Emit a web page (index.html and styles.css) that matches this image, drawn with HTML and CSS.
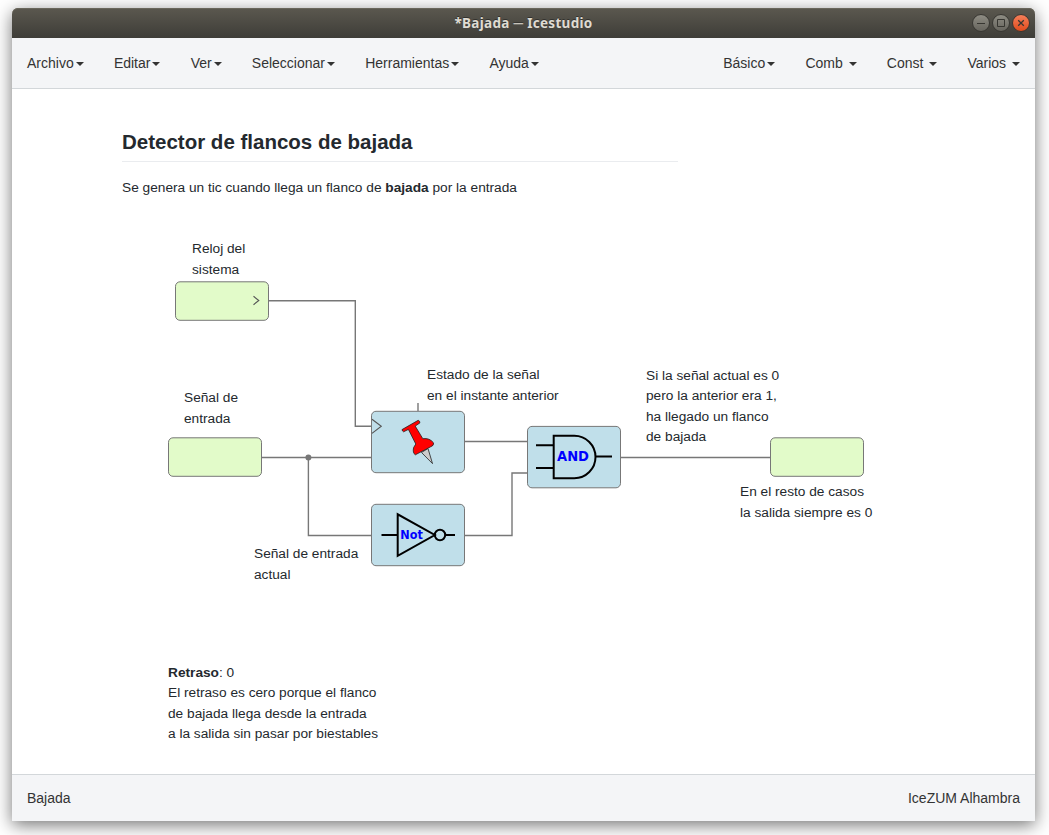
FILE: index.html
```
<!DOCTYPE html>
<html lang="es">
<head>
<meta charset="utf-8">
<title>*Bajada ─ Icestudio</title>
<link rel="stylesheet" href="styles.css">
</head>
<body>
<div class="window">
  <header class="titlebar">
    <h1 class="window-title">*Bajada ─ Icestudio</h1>
    <div class="window-buttons">
      <svg width="60" height="20" viewBox="0 0 60 20">
        <defs>
          <linearGradient id="gray" x2="0" y2="1"><stop offset="0" stop-color="#8f8d84"/><stop offset="1" stop-color="#65635c"/></linearGradient>
          <linearGradient id="orange" x2="0" y2="1"><stop offset="0" stop-color="#f5805b"/><stop offset="1" stop-color="#df4a1b"/></linearGradient>
        </defs>
        <g stroke="#373631" stroke-width="1">
          <circle cx="10" cy="10" r="8.5" fill="url(#gray)"/>
          <circle cx="30" cy="10" r="8.5" fill="url(#gray)"/>
          <circle cx="50" cy="10" r="8.5" fill="url(#orange)"/>
          <path d="M6 10.5h8M26.5 6.5h7v7h-7z" fill="none"/>
          <path d="M47.2 7.2l5.6 5.6M52.8 7.2l-5.6 5.6" fill="none" stroke-width="1.3"/>
        </g>
      </svg>
    </div>
  </header>
  <nav class="menubar">
    <div class="menu">
      <span class="item">Archivo<i class="caret"></i></span>
      <span class="item">Editar<i class="caret"></i></span>
      <span class="item">Ver<i class="caret"></i></span>
      <span class="item">Seleccionar<i class="caret"></i></span>
      <span class="item">Herramientas<i class="caret"></i></span>
      <span class="item">Ayuda<i class="caret"></i></span>
    </div>
    <div class="menu">
      <span class="item">Básico<i class="caret"></i></span>
      <span class="item">Comb <i class="caret"></i></span>
      <span class="item">Const <i class="caret"></i></span>
      <span class="item">Varios <i class="caret"></i></span>
    </div>
  </nav>
  <main class="canvas">
    <svg class="diagram" width="1023" height="685" viewBox="12 89 1023 685">
      <g class="wires">
        <path d="M269 300.7H355.3V426.3H371"/>
        <path d="M262 457.5H371"/>
        <path d="M308.4 457.5V535.5H371"/>
        <path d="M465 441.5H527"/>
        <path d="M465 535.5H512V473H527"/>
        <path d="M621 457.5H770"/>
        <path d="M418 403V411"/>
      </g>
      <circle class="joint" cx="308.4" cy="457.5" r="3"/>
      <g class="port">
        <rect x="175.5" y="281.8" width="93" height="38.5" rx="4.5"/>
        <rect x="168.5" y="437.8" width="93" height="38.5" rx="4.5"/>
        <rect x="770.5" y="437.8" width="93" height="38.5" rx="4.5"/>
      </g>
      <g class="block">
        <rect x="371.5" y="411.3" width="93" height="61.4" rx="4.5"/>
        <rect x="371.5" y="504.3" width="93" height="61.4" rx="4.5"/>
        <rect x="527.5" y="426.4" width="93" height="61.4" rx="4.5"/>
      </g>
      <path class="clock" d="M253.5 296.3L258.8 300.5L253.5 304.7M372 419.2L381.3 426.3L372 433.4"/>
      <g class="pin">
        <path d="M421.5 452.5L432.5 463.6L428 448.5z" fill="#ccc"/>
        <path d="M402 429.6L418.2 420.3Q420 420.8 419.9 422.9L415.2 426.1L422.8 438.7Q429.5 437.7 433.6 442.9Q434 445.6 430.8 446.7L415.3 454.8Q412.4 453 413.6 447.6L415.8 444L408.4 429.4L403.6 431.8Q402.3 431.3 402 429.6z" fill="#f00"/>
      </g>
      <g class="gate">
        <path d="M553.7 435.8H574.3A21.2 21.2 0 0 1 574.3 478.2H553.7zM536 445.3H553M536 467.9H553M595.5 456.5H612"/>
        <path d="M397.7 514.3V555.8L434.8 535z M381.5 535H397M445 535H455"/>
        <circle cx="440" cy="535" r="5.2"/>
      </g>
      <text class="gate-text" x="557" y="461" font-size="13.6" textLength="32" lengthAdjust="spacingAndGlyphs">AND</text>
      <text class="gate-text" x="400.3" y="539" font-size="11.6" textLength="22.5" lengthAdjust="spacingAndGlyphs">Not</text>
    </svg>
    <section class="note intro">
      <h2>Detector de flancos de bajada</h2>
      <p>Se genera un tic cuando llega un flanco de <b>bajada</b> por la entrada</p>
    </section>
    <p class="note clock-note">Reloj del<br>sistema</p>
    <p class="note input-note">Señal de<br>entrada</p>
    <p class="note state-note">Estado de la señal<br>en el instante anterior</p>
    <p class="note current-note">Señal de entrada<br>actual</p>
    <p class="note tic-note">Si la señal actual es 0<br>pero la anterior era 1,<br>ha llegado un flanco<br>de bajada</p>
    <p class="note rest-note">En el resto de casos<br>la salida siempre es 0</p>
    <p class="note delay-note"><b>Retraso</b>: 0<br>El retraso es cero porque el flanco<br>de bajada llega desde la entrada<br>a la salida sin pasar por biestables</p>
  </main>
  <footer class="statusbar"><span>Bajada</span><span>IceZUM Alhambra</span></footer>
</div>
</body>
</html>
```
FILE: styles.css
```
* { box-sizing: border-box; }
body {
  margin: 0;
  height: 835px;
  padding: 8px 14px 14px 12px;
  overflow: hidden;
  background: #fff;
  font: 14px/20px "Liberation Sans", Arial, sans-serif;
  color: #333;
}
.window {
  height: 813px;
  display: flex;
  flex-direction: column;
  border-radius: 6px 6px 0 0;
  box-shadow: 0 4px 17px rgba(0, 0, 0, .55);
}
.titlebar {
  height: 30px;
  display: grid;
  grid-template-columns: 1fr auto 1fr;
  align-items: center;
  border-radius: 6px 6px 0 0;
  background: linear-gradient(#5b584f, #3e3d38);
  box-shadow: inset 0 1px #69665b;
}
.window-title {
  grid-column: 2;
  margin: 0;
  font: bold 13.5px/20px "Noto Sans", sans-serif;
  letter-spacing: .3px;
  color: #dfdbd2;
  text-shadow: 0 -1px #33322e;
}
.window-buttons {
  justify-self: end;
  height: 20px;
  margin-right: 4px;
}
.window-buttons svg { display: block; }
.menubar {
  height: 51px;
  padding: 0 15px;
  display: flex;
  justify-content: space-between;
  align-items: center;
  background: #f4f5f7;
  border-bottom: 1px solid #d3d7da;
}
.menu { display: flex; gap: 30.2px; }
.item { white-space: pre; }
.caret {
  display: inline-block;
  margin-left: 2px;
  vertical-align: middle;
  border: 4px solid transparent;
  border-top-color: #333;
  border-bottom: 0;
}
.canvas {
  position: relative;
  height: 685px;
  background: #fff;
}
.diagram { display: block; }
.wires { fill: none; stroke: #777; stroke-width: 1.4; }
.joint { fill: #777; }
.port rect { fill: #e2fbc9; stroke: #777; }
.block rect { fill: #c0dfea; stroke: #777; }
.clock { fill: none; stroke: #555; stroke-width: 1.1; }
.pin { stroke: #222; stroke-width: .8; }
.gate { fill: none; stroke: #000; stroke-width: 2; }
.gate-text { font-family: "DejaVu Sans", sans-serif; font-weight: bold; fill: #00f; }
.note {
  position: absolute;
  margin: 0;
  font-size: 13.7px;
  line-height: 20.5px;
  white-space: nowrap;
  color: #24292e;
}
.intro { left: 110px; top: 40px; width: 556px; }
.intro h2 {
  margin: 0 0 16px;
  padding-bottom: 6px;
  border-bottom: 1px solid #eaecef;
  font-size: 20.5px;
  line-height: 26px;
}
.intro p { margin: 0; }
.clock-note { left: 180px; top: 150px; }
.input-note { left: 172px; top: 299px; }
.state-note { left: 415px; top: 276px; }
.current-note { left: 242px; top: 455px; }
.tic-note { left: 634px; top: 277px; line-height: 20.3px; }
.rest-note { left: 728px; top: 393px; }
.delay-note { left: 156px; top: 574px; line-height: 20.3px; }
.statusbar {
  height: 47px;
  padding: 0 15px;
  display: flex;
  justify-content: space-between;
  align-items: center;
  background: #f4f5f7;
  border-top: 1px solid #d3d7da;
}
```
